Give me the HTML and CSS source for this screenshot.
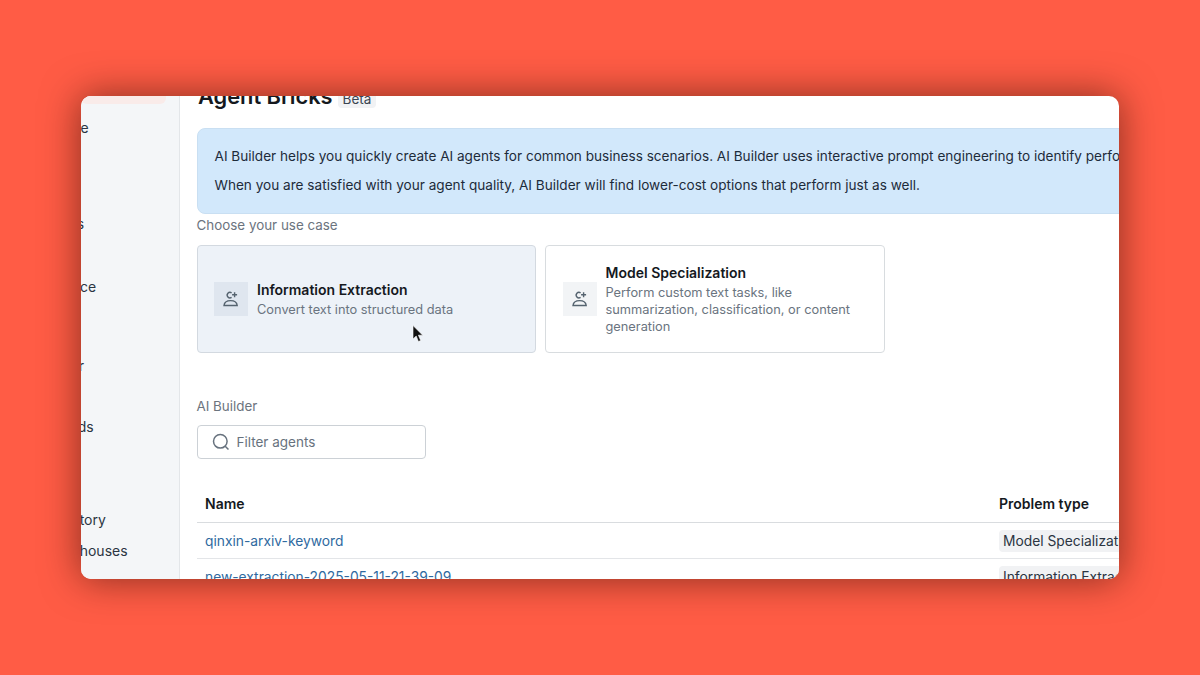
FILE: index.html
```html
<!DOCTYPE html>
<html lang="en">
<head>
    <meta charset="UTF-8">
    <meta name="viewport" content="width=device-width, initial-scale=1.0">
    <title>Agent Bricks</title>
    <link rel="stylesheet" href="styles.css">
</head>
<body>
    <div class="window">
        <aside class="sidebar">
            <div class="new-item"></div>
            <nav class="nav-group nav-top">
                <a>Workspace</a>
                <a>Recents</a>
                <a>Catalog</a>
                <a>Workflows</a>
                <a>Compute</a>
                <a>Marketplace</a>
            </nav>
            <nav class="nav-group nav-sql">
                <a>SQL Editor</a>
                <a>Queries</a>
                <a>Dashboards</a>
                <a>Genie</a>
                <a>Alerts</a>
                <a>Query History</a>
                <a>SQL Warehouses</a>
            </nav>
        </aside>

        <main class="content">
            <div class="page-title">
                <h1>Agent Bricks</h1>
                <span class="beta">Beta</span>
            </div>

            <div class="banner">
                <p>AI Builder helps you quickly create AI agents for common business scenarios. AI Builder uses interactive prompt engineering to identify performant configurations.</p>
                <p>When you are satisfied with your agent quality, AI Builder will find lower-cost options that perform just as well.</p>
            </div>

            <div class="section-label">Choose your use case</div>
            <div class="cards">
                <div class="card card-active">
                    <div class="card-icon">
                        <svg width="18" height="18" viewBox="0 0 18 18" fill="none" stroke="currentColor" stroke-width="1.4">
                            <path d="M9.600 2.800a2.800 2.800 0 1 0 0 4.600"/>
                            <path d="M12.600 2.200v5M10.100 4.700h5"/>
                            <path d="M2 15.500c.3-3 3-4.900 6.600-4.900s6.300 1.900 6.600 4.900z"/>
                        </svg>
                    </div>
                    <div class="card-text">
                        <div class="card-title">Information Extraction</div>
                        <div class="card-desc">Convert text into structured data</div>
                    </div>
                </div>
                <div class="card">
                    <div class="card-icon">
                        <svg width="18" height="18" viewBox="0 0 18 18" fill="none" stroke="currentColor" stroke-width="1.4">
                            <path d="M9.600 2.800a2.800 2.800 0 1 0 0 4.600"/>
                            <path d="M12.600 2.200v5M10.100 4.700h5"/>
                            <path d="M2 15.500c.3-3 3-4.900 6.600-4.900s6.300 1.900 6.600 4.900z"/>
                        </svg>
                    </div>
                    <div class="card-text">
                        <div class="card-title">Model Specialization</div>
                        <div class="card-desc">Perform custom text tasks, like summarization, classification, or content generation</div>
                    </div>
                </div>
            </div>

            <div class="section-label list-label">AI Builder</div>
            <div class="search">
                <svg width="18" height="18" viewBox="0 0 18 18" fill="none" stroke="currentColor" stroke-width="1.5">
                    <circle cx="8.300" cy="8.300" r="6.800"/>
                    <path d="M13.200 13.200l3.300 3.300"/>
                </svg>
                <span>Filter agents</span>
            </div>

            <table class="agents">
                <thead>
                    <tr><th>Name</th><th>Problem type</th></tr>
                </thead>
                <tbody>
                    <tr>
                        <td><a>qinxin-arxiv-keyword</a></td>
                        <td><span class="tag">Model Specialization</span></td>
                    </tr>
                    <tr>
                        <td><a>new-extraction-2025-05-11-21-39-09</a></td>
                        <td><span class="tag">Information Extraction</span></td>
                    </tr>
                </tbody>
            </table>
        </main>

        <svg class="cursor" width="12" height="18" viewBox="0 0 12 18">
            <path d="M1 0.500v13.500l3.200-3 2.200 5.500 2.300-1-2.300-5.300h4.300z" fill="#111" stroke="#fff" stroke-width="0.6"/>
        </svg>
    </div>
</body>
</html>
```

FILE: styles.css
```css
* {
    box-sizing: border-box;
}

body {
    margin: 0;
    height: 675px;
    background: #ff5c45;
    display: flex;
    align-items: center;
    justify-content: center;
    font-family: Inter, "Liberation Sans", sans-serif;
    color: #1f2a37;
    overflow: hidden;
}

.window {
    position: relative;
    width: 1038px;
    height: 483px;
    display: flex;
    background: #fff;
    border-radius: 10px;
    overflow: hidden;
    box-shadow: 0 0 38px rgba(50, 15, 5, 0.6);
}

/* sidebar, scrolled sideways so labels get cut at the window edge */
.sidebar {
    flex: 0 0 98.5px;
    background: #f4f6f8;
    border-right: 1px solid #e3e6e9;
    overflow: hidden;
    font-size: 14px;
    color: #2b3542;
}

.new-item {
    width: 85px;
    height: 8px;
    background: #f9ebe9;
    border-radius: 0 0 6px 6px;
}

.nav-group {
    margin-left: -67px;
    white-space: nowrap;
}

.nav-group a {
    display: flex;
    align-items: center;
}

.nav-top {
    margin-top: 8px;
}

.nav-top a {
    height: 31.8px;
}

.nav-sql {
    margin-top: 47px;
}

.nav-sql a {
    height: 30.83px;
}

.content {
    flex: 1;
    min-width: 0;
    padding: 0 0 0 17px;
    overflow: hidden;
}

.page-title {
    display: flex;
    align-items: center;
    gap: 5px;
    height: 32px;
    margin-top: -16px;
    margin-bottom: 16px;
    padding-left: 1.5px;
}

.page-title h1 {
    margin: 0;
    font-size: 21.8px;
    font-weight: 600;
    color: #15191e;
}

.beta {
    margin-top: 5px;
    padding: 1px 5px;
    font-size: 13.5px;
    background: #f1f2f4;
    border-radius: 4px;
    color: #3a4552;
}

.banner {
    height: 86px;
    width: 1100px;
    padding: 19px 17px;
    background: #d2e8fb;
    border: 1px solid #c9dff2;
    border-radius: 8px;
    font-size: 13.6px;
    color: #1d2b3a;
    white-space: nowrap;
}

.banner p {
    margin: 0 0 12px;
    line-height: 17px;
}

.section-label {
    font-size: 13.4px;
    line-height: 17px;
    color: #6c747e;
    margin: 3px 0 11px;
}

.cards {
    display: grid;
    grid-template-columns: 339.5px 339.5px;
    gap: 9px;
}

.card {
    height: 108px;
    display: flex;
    align-items: center;
    gap: 9px;
    padding: 0 16px 0 16.5px;
    border: 1px solid #d8dcdf;
    border-radius: 4px;
    background: #fff;
}

.card-active {
    background: #edf2f8;
    border-color: #d3d9e0;
}

.card-icon {
    flex: 0 0 34px;
    height: 34px;
    display: flex;
    align-items: center;
    justify-content: center;
    background: #f2f4f6;
    color: #55636f;
}

.card-active .card-icon {
    background: #dfe6ef;
}

.card-title {
    font-size: 14px;
    font-weight: 600;
    line-height: 18px;
    color: #15191e;
}

.card-desc {
    margin-top: 2px;
    font-size: 12.8px;
    line-height: 17px;
    color: #6a7480;
}

.list-label {
    margin: 45px 0 10px;
}

.search {
    width: 229.5px;
    height: 34px;
    display: flex;
    align-items: center;
    gap: 7px;
    padding: 0 14px;
    border: 1px solid #ccd1d6;
    border-radius: 4px;
    font-size: 13.500px;
    color: #67727e;
}

.agents {
    width: 1100px;
    margin-top: 26px;
    border-collapse: collapse;
    table-layout: fixed;
    font-size: 14px;
}

.agents th {
    height: 37px;
    padding: 0 8.5px;
    text-align: left;
    font-weight: 600;
    color: #15191e;
    border-bottom: 1px solid #d9dcdf;
}

.agents th:first-child {
    width: 794px;
}

.agents td {
    height: 36px;
    padding: 1px 8.5px 0;
    border-bottom: 1px solid #e3e5e8;
    white-space: nowrap;
    font-size: 13.800px;
}

.agents a {
    color: #2f6a9f;
}

.tag {
    padding: 3px 4px;
    background: #f1f2f4;
    border-radius: 4px;
    color: #2b3542;
}

.cursor {
    position: absolute;
    left: 331px;
    top: 229px;
}
```
